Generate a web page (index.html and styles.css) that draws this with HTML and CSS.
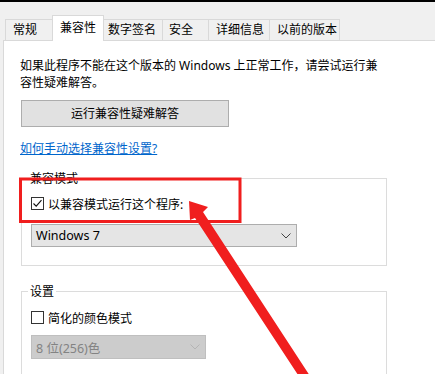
FILE: index.html
```html
<!DOCTYPE html>
<html lang="zh-CN">
<head>
	<meta charset="UTF-8">
	<title>属性 - 兼容性</title>
	<link rel="stylesheet" href="styles.css">
</head>
<body>
	<div class="topline"></div>
	<ul class="tabs">
		<li class="tab t1">常规</li>
		<li class="tab t2 active">兼容性</li>
		<li class="tab t3">数字签名</li>
		<li class="tab t4">安全</li>
		<li class="tab t5">详细信息</li>
		<li class="tab t6">以前的版本</li>
	</ul>

	<div class="panel">
		<p class="intro">如果此程序不能在这个版本的 Windows 上正常工作，请尝试运行兼<br>容性疑难解答。</p>
		<div class="btn">运行兼容性疑难解答</div>
		<a class="link" href="javascript:;">如何手动选择兼容性设置?</a>

		<fieldset class="group g1">
			<legend>兼容模式</legend>
			<div class="check">
				<span class="box"><svg width="11" height="11" viewBox="0 0 11 11"><path d="M1.5 5.5 L4.2 8.2 L9.5 2.2" fill="none" stroke="#111" stroke-width="1.1"/></svg></span>
				以兼容模式运行这个程序:
			</div>
			<div class="select">
				<span>Windows 7</span>
				<svg class="chev" width="10" height="6" viewBox="0 0 10 6"><path d="M0.5 0.5 L5 5 L9.5 0.5" fill="none" stroke="#444" stroke-width="1"/></svg>
			</div>
		</fieldset>

		<fieldset class="group g2">
			<legend>设置</legend>
			<div class="check">
				<span class="box"></span>
				简化的颜色模式
			</div>
			<div class="select disabled">
				<span>8 位(256)色</span>
				<svg class="chev" width="10" height="6" viewBox="0 0 10 6"><path d="M0.5 0.5 L5 5 L9.5 0.5" fill="none" stroke="#b4b4b4" stroke-width="1"/></svg>
			</div>
		</fieldset>
	</div>

	<!-- annotation drawn over the dialog -->
	<svg class="mark" width="435" height="374" viewBox="0 0 435 374">
		<rect x="20.5" y="179" width="219.5" height="42.5" fill="none" stroke="#f01e1e" stroke-width="3"/>
		<polygon points="189,201 208,207 203,212 310,376 302,381 195,218 190,220" fill="#f01e1e"/>
	</svg>
</body>
</html>
```

FILE: styles.css
```css
*{padding: 0;margin: 0;box-sizing: border-box;}
html,body{width: 435px;height: 374px;overflow: hidden;}
body{
	background: #F0F0F0;
	font-family: "Noto Sans", "Noto Sans CJK SC", sans-serif;
	font-size: 12px;
	color: #000;
	position: relative;
}

.topline{
	height: 2px;
	background: #000;
}

.tabs{
	list-style: none;
	display: flex;
	align-items: flex-end;
	height: 38px;
	padding-left: 5px;
}
.tab{
	height: 21px;
	line-height: 20px;
	border: 1px solid #D9D9D9;
	border-bottom: none;
	border-right: none;
	background: #F0F0F0;
	padding-left: 7px;
	white-space: nowrap;
}
.t1{width: 47px;}
.t2{width: 52px;}
.t3{width: 58px;padding-left: 4px;border-left: none;}
.t4{width: 46px;padding-left: 6px;}
.t5{width: 61px;}
.t6{width: 71px;border-right: 1px solid #D9D9D9;}
.tab.active{
	position: relative;
	z-index: 1;
	height: 26px;
	margin-bottom: -1px;
	line-height: 24px;
	background: #FFF;
	border-right: 1px solid #D9D9D9;
}

.panel{
	margin-left: 3px;
	height: 334px;
	overflow: hidden;
	background: #FFF;
	border-top: 1px solid #D9D9D9;
	border-left: 1px solid #D9D9D9;
	padding: 16px 0 0 16px;
}

.intro{
	line-height: 17px;
	white-space: nowrap;
}

.btn{
	width: 208px;
	height: 27px;
	margin: 9px 0 0 1px;
	background: #E1E1E1;
	border: 1px solid #ADADAD;
	text-align: center;
	line-height: 25px;
}

.link{
	display: block;
	width: fit-content;
	margin-top: 13px;
	line-height: 17px;
	color: #0066CC;
	text-decoration: underline;
}

.group{
	width: 366px;
	margin-left: 1px;
	border: 1px solid #DCDCDC;
	padding: 8px 0 18px 0;
	min-inline-size: 0;
}
.group legend{
	margin-left: 6px;
	padding: 0 2px;
	line-height: 17px;
}
.g1{margin-top: 13px;}
.g2{margin-top: 17px;padding-top: 9px;}

.check{
	display: flex;
	align-items: center;
	gap: 4px;
	height: 17px;
	margin-left: 9px;
}
.box{
	width: 13px;
	height: 13px;
	border: 1px solid #333;
	background: #FFF;
	display: flex;
	align-items: center;
	justify-content: center;
}

.select{
	display: flex;
	align-items: center;
	justify-content: space-between;
	width: 266px;
	height: 23px;
	margin: 12px 0 0 9px;
	padding: 0 5px 0 4px;
	background: #E5E5E5;
	border: 1px solid #ADADAD;
	font-size: 12.5px;
}
.select.disabled{
	width: 175px;
	height: 24px;
	margin-top: 9px;
	background: #CCCCCC;
	border-color: #BFBFBF;
	color: #838383;
}

.mark{
	position: absolute;
	top: 0;
	left: 0;
	pointer-events: none;
}
```
